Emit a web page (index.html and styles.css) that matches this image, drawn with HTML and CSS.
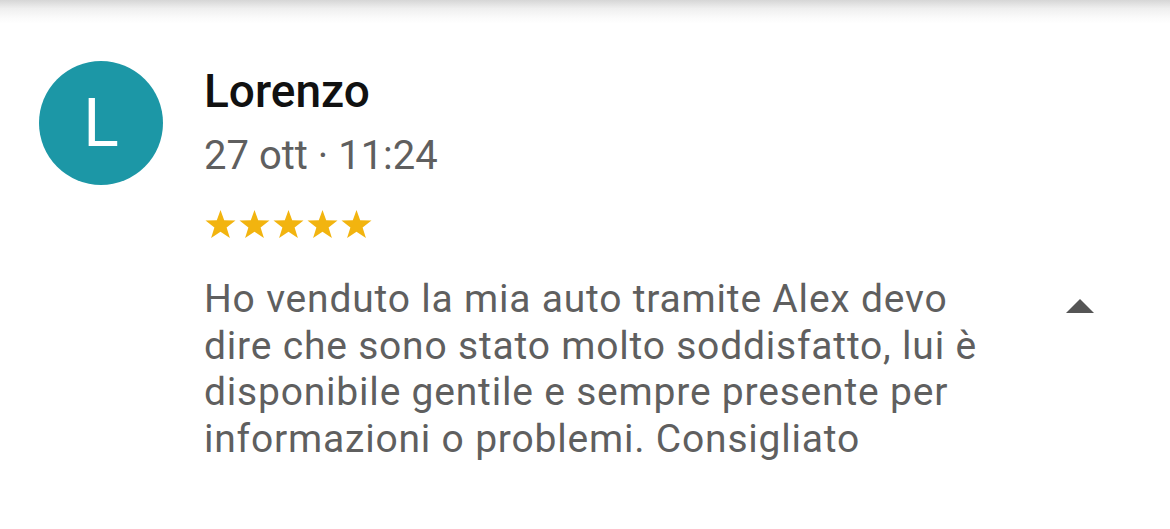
FILE: index.html
```html
<!DOCTYPE html>
<html lang="it">
<head>
  <meta charset="UTF-8" />
  <title>Recensione</title>
  <link rel="stylesheet" href="styles.css">
</head>
<body>
  <div class="top-shade"></div>

  <div class="review">
    <div class="avatar">L</div>

    <div class="review-body">
      <div class="author">Lorenzo</div>
      <div class="date">27 ott · 11:24</div>
      <svg class="stars" width="170" height="28" viewBox="0 0 170 28" aria-label="5 stelle">
        <defs>
          <polygon id="star" points="15.5,0 19.2,10.3 30.5,10.6 21.6,17.4 24.9,28 15.5,21.7 6.1,28 9.4,17.4 0.5,10.6 11.8,10.3"/>
        </defs>
        <use href="#star" x="0"/>
        <use href="#star" x="34"/>
        <use href="#star" x="68"/>
        <use href="#star" x="102"/>
        <use href="#star" x="136"/>
      </svg>

      <div class="text-row">
        <p class="review-text">Ho venduto la mia auto tramite Alex devo dire che sono stato molto soddisfatto, lui è disponibile gentile e sempre presente per informazioni o problemi. Consigliato</p>
        <svg class="collapse" width="28" height="15" viewBox="0 0 28 15">
          <path d="M0 14 L14 0 L28 14 Z" fill="#555"/>
        </svg>
      </div>
    </div>
  </div>
</body>
</html>
```

FILE: styles.css
```css
body {
  margin: 0;
  padding: 0;
  background: #fff;
  font-family: Roboto, "Liberation Sans", sans-serif;
  width: 1170px;
  height: 529px;
  overflow: hidden;
}

.top-shade {
  height: 24px;
  background: linear-gradient(to bottom, #d6d6d6 0%, #efefef 35%, #fbfbfb 75%, #fff 100%);
}

.review {
  display: flex;
  align-items: flex-start;
  gap: 41px;
  padding: 37px 0 0 39px;
}

.avatar {
  flex: none;
  width: 124px;
  height: 124px;
  border-radius: 50%;
  background: #1c97a6;
  color: #fff;
  font-size: 66px;
  font-weight: 400;
  display: flex;
  align-items: center;
  justify-content: center;
}

.review-body {
  flex: 1;
  padding-top: 5px;
}

.author {
  font-size: 46px;
  font-weight: 500;
  color: #111;
  line-height: 50px;
}

.date {
  font-size: 40px;
  color: #5f5f5f;
  line-height: 48px;
  margin-top: 16px;
}

.stars {
  display: block;
  fill: #f2b40f;
  margin-top: 30px;
  margin-left: 1px;
}

.text-row {
  display: flex;
  align-items: flex-start;
  margin-top: 38px;
}

.review-text {
  margin: 0;
  width: 792px;
  font-size: 39px;
  letter-spacing: 0.8px;
  line-height: 46.5px;
  color: #5f5f5f;
}

.collapse {
  margin: 23px 0 0 70px;
}
```
